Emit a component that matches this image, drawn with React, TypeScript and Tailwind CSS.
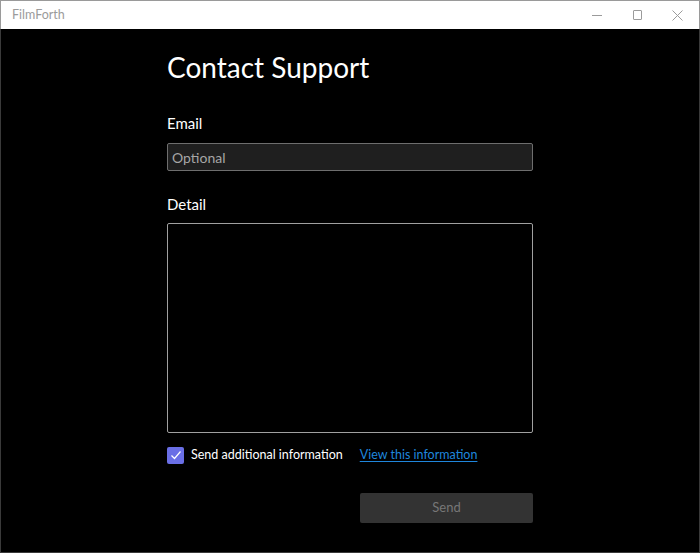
import React from 'react';

const font = { fontFamily: 'Lato, "Noto Sans", sans-serif' };

const TitleBar = () => {
  return (
    <div className="flex h-[29px] items-center justify-between border-t border-x border-[#9a9a9a] bg-white">
      <span className="pl-[11px] text-[12.5px] text-[#9b9b9b]">FilmForth</span>
      <div className="flex h-full items-center pr-[2px]">
        <div className="flex w-[40px] justify-center">
          <div className="h-px w-[10px] bg-[#9b9b9b]" />
        </div>
        <div className="flex w-[40px] justify-center">
          <div className="h-[10px] w-[9px] rounded-[1px] border border-[#9b9b9b]" />
        </div>
        <div className="flex w-[40px] justify-center">
          <svg width="11" height="11" viewBox="0 0 11 11" fill="none" stroke="#9b9b9b" strokeWidth="1">
            <path d="M0.5 0.5 L10.5 10.5 M10.5 0.5 L0.5 10.5" />
          </svg>
        </div>
      </div>
    </div>
  );
};

const App = () => {
  return (
    <div className="flex h-[553px] w-[700px] flex-col overflow-hidden bg-black" style={font}>
      <TitleBar />
      <main className="flex flex-1 flex-col border-x border-b border-[#3a3a3a] pl-[166px]">
        <div className="flex w-[366px] flex-col">
          <h1 className="mt-[18px] text-[28px] leading-[40px] text-white">Contact Support</h1>

          <label className="mt-[26px] text-[15px] leading-[20px] text-white">Email</label>
          <div className="mt-[10px] flex h-[28px] items-center rounded-[2px] border border-[#6e6e6e] bg-[#1f1f1f] px-[4px]">
            <span className="text-[14px] text-[#a6a6a6]">Optional</span>
          </div>

          <label className="mt-[23px] text-[15px] leading-[20px] text-white">Detail</label>
          <div className="mt-[9px] h-[210px] rounded-[2px] border border-[#a0a0a0] bg-black" />

          <div className="mt-[13px] flex items-center">
            <div className="flex h-[17px] w-[17px] items-center justify-center rounded-[2px] bg-[#6a6fe6]">
              <svg width="12" height="12" viewBox="0 0 12 12" fill="none" stroke="white" strokeWidth="1.2">
                <path d="M1.5 6.5 L4.5 9.5 L10.5 2.5" />
              </svg>
            </div>
            <span className="ml-[7px] text-[12.5px] text-white">Send additional information</span>
            <a className="ml-[17px] text-[12.5px] text-[#1f86dc] underline underline-offset-2">View this information</a>
          </div>

          <div className="mt-[28px] flex justify-end">
            <button className="h-[30px] w-[173px] rounded-[2px] bg-[#333333] text-[13px] text-[#777777]">
              Send
            </button>
          </div>
        </div>
      </main>
    </div>
  );
};

export default App;
